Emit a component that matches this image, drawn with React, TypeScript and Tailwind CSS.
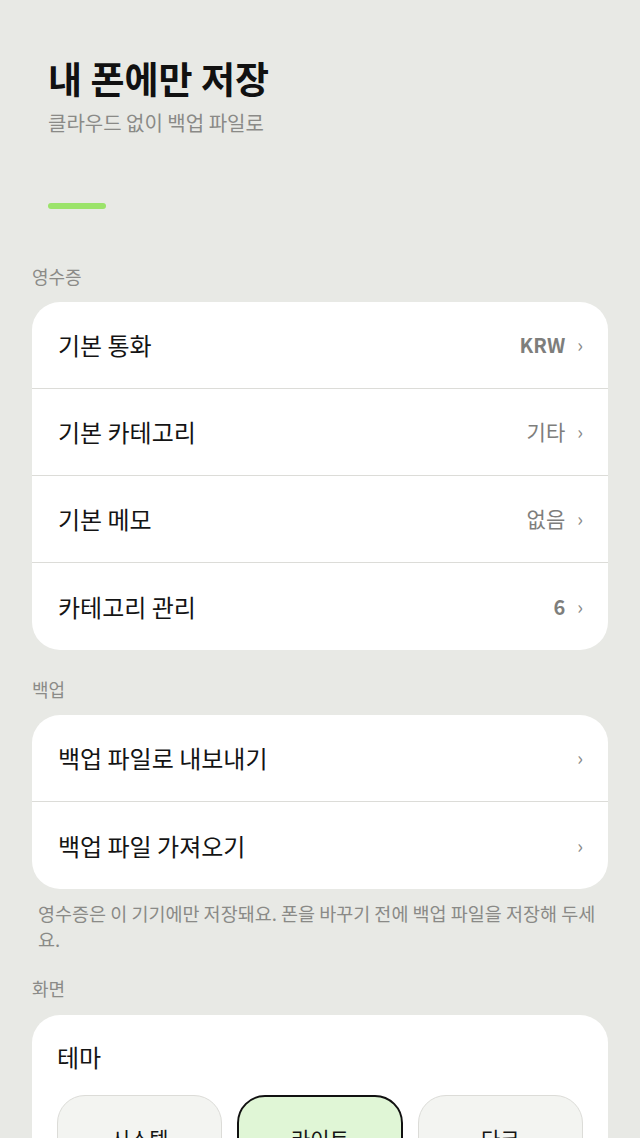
import React from 'react';

type Row = { label: string; value?: string; bold?: boolean };

const receiptRows: Row[] = [
  { label: '기본 통화', value: 'KRW', bold: true },
  { label: '기본 카테고리', value: '기타' },
  { label: '기본 메모', value: '없음' },
  { label: '카테고리 관리', value: '6', bold: true },
];

const backupRows: Row[] = [{ label: '백업 파일로 내보내기' }, { label: '백업 파일 가져오기' }];

const SectionLabel: React.FC<{ children: React.ReactNode }> = ({ children }) => (
  <p className="text-[18px] leading-[24px] text-[#8b8b88]">{children}</p>
);

const SettingsCard: React.FC<{ rows: Row[] }> = ({ rows }) => (
  <div className="bg-white rounded-[28px] overflow-hidden divide-y divide-[#dcdcd8]">
    {rows.map((row) => (
      <button
        key={row.label}
        className="w-full h-[87px] flex items-center justify-between pl-[26px] pr-[25px] text-left"
      >
        <span className="text-[24px] text-[#141414]">{row.label}</span>
        <span className="flex items-center gap-[12px]">
          {row.value && (
            <span
              className={
                row.bold
                  ? 'text-[20px] font-semibold text-[#7e7e7c]'
                  : 'text-[21px] text-[#7e7e7c]'
              }
            >
              {row.value}
            </span>
          )}
          <span className="text-[19px] text-[#8a8a88] leading-none -mt-[3px]">›</span>
        </span>
      </button>
    ))}
  </div>
);

const themes = ['시스템', '라이트', '다크'];

export default function App() {
  const selected = '라이트';

  return (
    <div
      className="min-h-[1138px] bg-[#e8e9e5]"
      style={{ fontFamily: '"Noto Sans CJK KR", "Noto Sans", sans-serif' }}
    >
      {/* Header */}
      <div className="pt-[56px] px-[48px]">
        <h1 className="text-[37px] leading-[44px] font-bold text-[#111111]">내 폰에만 저장</h1>
        <p className="mt-[9px] text-[20px] leading-[28px] text-[#8a8a87]">클라우드 없이 백업 파일로</p>
        <div className="mt-[66px] w-[58px] h-[6px] rounded-full bg-[#9be36a]" />
      </div>

      <div className="px-[32px] pb-[40px]">
        {/* Receipts */}
        <div className="mt-[55px]">
          <SectionLabel>영수증</SectionLabel>
          <div className="mt-[14px]">
            <SettingsCard rows={receiptRows} />
          </div>
        </div>

        {/* Backup */}
        <div className="mt-[27px]">
          <SectionLabel>백업</SectionLabel>
          <div className="mt-[14px]">
            <SettingsCard rows={backupRows} />
          </div>
          <p className="mt-[11px] px-[6px] text-[18.5px] leading-[26px] text-[#8a8a87]">
            영수증은 이 기기에만 저장돼요. 폰을 바꾸기 전에 백업 파일을 저장해 두세요.
          </p>
        </div>

        {/* Display */}
        <div className="mt-[24px]">
          <SectionLabel>화면</SectionLabel>
          <div className="mt-[15px] bg-white rounded-[28px] px-[25px] pt-[26px] pb-[25px]">
            <p className="text-[24px] leading-[32px] text-[#141414]">테마</p>
            <div className="mt-[22px] grid grid-cols-3 gap-[15px]">
              {themes.map((t) => (
                <button
                  key={t}
                  className={
                    t === selected
                      ? 'h-[88px] rounded-[28px] border-2 border-[#111111] bg-[#e0f6d6] text-[21px] text-[#141414]'
                      : 'h-[88px] rounded-[28px] border border-[#dcdcd8] bg-[#f3f4f1] text-[21px] text-[#141414]'
                  }
                >
                  {t}
                </button>
              ))}
            </div>
          </div>
        </div>
      </div>
    </div>
  );
}
